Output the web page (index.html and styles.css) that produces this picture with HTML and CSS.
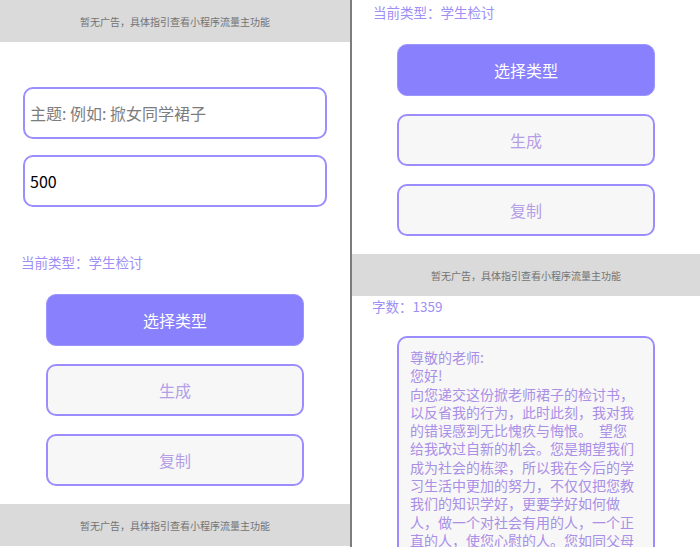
FILE: index.html
```html
<!DOCTYPE html>
<html lang="zh-CN">
<head>
<meta charset="utf-8">
<title>检讨书生成</title>
<link rel="stylesheet" href="styles.css">
</head>
<body>
  <div class="panel panel-left">
    <div class="page">
      <div class="ad">暂无广告，具体指引查看小程序流量主功能</div>
      <input class="field field-topic" type="text" placeholder="主题: 例如: 掀女同学裙子">
      <input class="field field-count" type="text" value="500">
      <div class="type-label">当前类型：学生检讨</div>
      <div class="btn btn-primary btn-first">选择类型</div>
      <div class="btn btn-ghost">生成</div>
      <div class="btn btn-ghost">复制</div>
      <div class="ad ad-bottom">暂无广告，具体指引查看小程序流量主功能</div>
    </div>
  </div>
  <div class="divider"></div>
  <div class="panel panel-right">
    <div class="page page-scrolled">
      <div class="ad">暂无广告，具体指引查看小程序流量主功能</div>
      <input class="field field-topic" type="text" placeholder="主题: 例如: 掀女同学裙子">
      <input class="field field-count" type="text" value="500">
      <div class="type-label">当前类型：学生检讨</div>
      <div class="btn btn-primary btn-first">选择类型</div>
      <div class="btn btn-ghost">生成</div>
      <div class="btn btn-ghost">复制</div>
      <div class="ad ad-bottom">暂无广告，具体指引查看小程序流量主功能</div>
      <div class="count-label">字数：1359</div>
      <div class="result">尊敬的老师:<br>您好!<br>向您递交这份掀老师裙子的检讨书，<br>以反省我的行为，此时此刻，我对我<br>的错误感到无比愧疚与悔恨。&ensp;望您<br>给我改过自新的机会。您是期望我们<br>成为社会的栋梁，所以我在今后的学<br>习生活中更加的努力，不仅仅把您教<br>我们的知识学好，更要学好如何做<br>人，做一个对社会有用的人，一个正<br>直的人，使您心慰的人。您如同父母<br>一般关心我们，教导我们，我却做出<br>这样的事情，实在是不应该。</div>
    </div>
  </div>
</body>
</html>
```

FILE: styles.css
```css
html, body {
  margin: 0;
  padding: 0;
}

body {
  display: flex;
  height: 547px;
  overflow: hidden;
  background: #ffffff;
  font-family: "Noto Sans CJK SC", "Noto Sans", sans-serif;
}

.panel {
  flex: none;
  height: 547px;
  overflow: hidden;
  background: #ffffff;
}

.panel-left {
  width: 350px;
}

.panel-right {
  width: 348px;
}

.divider {
  flex: none;
  width: 2px;
  background: #7c7c7c;
}

.page {
  display: flex;
  flex-direction: column;
  align-items: center;
}

.page-scrolled {
  margin-top: -250px;
}

.ad {
  align-self: stretch;
  height: 42px;
  display: flex;
  align-items: center;
  justify-content: center;
  background: #dadada;
  color: #737373;
  font-size: 10px;
}

.ad-bottom {
  margin-top: 18px;
}

.field {
  box-sizing: border-box;
  width: calc(100% - 46px);
  height: 52px;
  padding: 0 5px;
  border: 2px solid #9b8ffd;
  border-radius: 10px;
  background: #ffffff;
  color: #000000;
  font-family: inherit;
  font-size: 16px;
  outline: none;
}

.field::placeholder {
  color: #7d7d7d;
}

.field-topic {
  margin-top: 45px;
}

.field-count {
  margin-top: 16px;
}

.type-label,
.count-label {
  align-self: stretch;
  padding-left: 21px;
  line-height: 20px;
  font-size: 13.5px;
  color: #9d8ff5;
}

.type-label {
  margin-top: 45px;
}

.count-label {
  padding-left: 20px;
}

.btn {
  box-sizing: border-box;
  width: 258px;
  height: 52px;
  margin-top: 18px;
  display: flex;
  align-items: center;
  justify-content: center;
  border-radius: 10px;
  font-size: 16px;
}

.btn-first {
  margin-top: 22px;
}

.btn-primary {
  background: #8880fc;
  border: 1px solid #9d95ff;
  color: #ffffff;
}

.btn-ghost {
  background: #f7f7f7;
  border: 2px solid #9b8dfd;
  color: #b49ee6;
}

.result {
  box-sizing: border-box;
  width: 258px;
  margin-top: 20px;
  padding: 10px 11px;
  border: 2px solid #9b8dfd;
  border-radius: 10px;
  background: #f7f7f7;
  color: #a98fe6;
  font-size: 14px;
  line-height: 18.3px;
  white-space: nowrap;
}
```
